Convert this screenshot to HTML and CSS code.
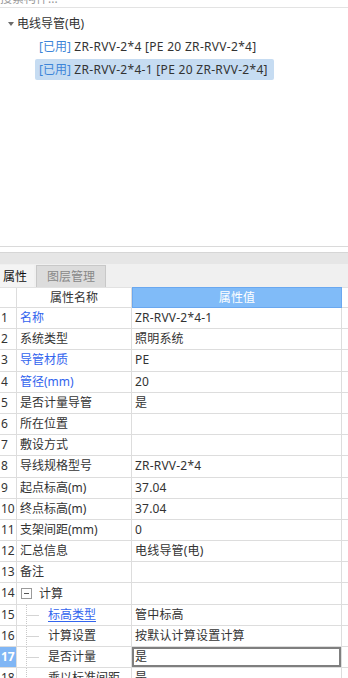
FILE: index.html
```html
<!DOCTYPE html>
<html lang="zh-CN">
<head>
    <meta charset="UTF-8">
    <meta name="viewport" content="width=device-width, initial-scale=1.0">
    <title>构件属性</title>
    <link rel="stylesheet" href="styles.css">
</head>
<body>
    <div id="search">
        <span class="search-text">搜索构件...</span>
    </div>

    <div id="tree">
        <div class="tree-root"><span class="caret"></span>电线导管(电)</div>
        <div class="tree-item"><span class="used">[已用]</span> ZR-RVV-2*4 [PE 20 ZR-RVV-2*4]</div>
        <div class="tree-item selected"><span class="used">[已用]</span> ZR-RVV-2*4-1 [PE 20 ZR-RVV-2*4]</div>
    </div>

    <div id="splitter"></div>

    <div id="tabs">
        <div class="tab active">属性</div>
        <div class="tab">图层管理</div>
    </div>

    <div id="props">
        <div class="row head">
            <div class="num"></div>
            <div class="name">属性名称</div>
            <div class="value">属性值</div>
        </div>
        <div class="row"><div class="num">1</div><div class="name link">名称</div><div class="value">ZR-RVV-2*4-1</div></div>
        <div class="row"><div class="num">2</div><div class="name">系统类型</div><div class="value">照明系统</div></div>
        <div class="row"><div class="num">3</div><div class="name link">导管材质</div><div class="value">PE</div></div>
        <div class="row"><div class="num">4</div><div class="name link">管径(mm)</div><div class="value">20</div></div>
        <div class="row"><div class="num">5</div><div class="name">是否计量导管</div><div class="value">是</div></div>
        <div class="row"><div class="num">6</div><div class="name">所在位置</div><div class="value"></div></div>
        <div class="row"><div class="num">7</div><div class="name">敷设方式</div><div class="value"></div></div>
        <div class="row"><div class="num">8</div><div class="name">导线规格型号</div><div class="value">ZR-RVV-2*4</div></div>
        <div class="row"><div class="num">9</div><div class="name">起点标高(m)</div><div class="value">37.04</div></div>
        <div class="row"><div class="num">10</div><div class="name">终点标高(m)</div><div class="value">37.04</div></div>
        <div class="row"><div class="num">11</div><div class="name">支架间距(mm)</div><div class="value">0</div></div>
        <div class="row"><div class="num">12</div><div class="name">汇总信息</div><div class="value">电线导管(电)</div></div>
        <div class="row"><div class="num">13</div><div class="name">备注</div><div class="value"></div></div>
        <div class="row"><div class="num">14</div><div class="name group"><span class="toggle"></span>计算</div><div class="value"></div></div>
        <div class="row"><div class="num">15</div><div class="name sub link under">标高类型</div><div class="value">管中标高</div></div>
        <div class="row"><div class="num">16</div><div class="name sub">计算设置</div><div class="value">按默认计算设置计算</div></div>
        <div class="row current"><div class="num">17</div><div class="name sub">是否计量</div><div class="value">是</div></div>
        <div class="row"><div class="num">18</div><div class="name sub">乘以标准间距</div><div class="value">是</div></div>
    </div>
</body>
</html>
```

FILE: styles.css
```css
body {
    margin: 0;
    width: 348px;
    height: 678px;
    overflow: hidden;
    background: #fff;
    color: #333;
    font-family: "Noto Sans", "Noto Sans CJK SC", sans-serif;
    font-size: 12px;
}

#search {
    height: 7px;
    overflow: hidden;
    border-bottom: 1px solid #e3e3e3;
}

.search-text {
    display: block;
    margin-top: -8px;
    line-height: 14px;
    color: #9a9a9a;
}

#tree {
    height: 239px;
    padding-top: 5px;
    box-sizing: border-box;
    border-bottom: 1px solid #dadada;
}

.tree-root,
.tree-item {
    height: 21px;
    line-height: 21px;
    white-space: nowrap;
    margin-bottom: 2px;
}

.tree-root {
    display: flex;
    align-items: center;
    padding-left: 8px;
}

.caret {
    width: 0;
    height: 0;
    border-left: 3.5px solid transparent;
    border-right: 3.5px solid transparent;
    border-top: 4px solid #6b6b6b;
    margin-right: 3px;
}

.tree-item {
    margin-left: 35px;
    padding-left: 4px;
    width: 235px;
    border-radius: 2px;
    letter-spacing: 0.3px;
}

.tree-item.selected {
    background: #c6dcf2;
}

.used {
    color: #3d85d8;
    letter-spacing: 0;
}

#splitter {
    height: 12px;
    margin-top: 5px;
    background: #e6e6e6;
    border-top: 1px solid #d6d6d6;
    box-sizing: border-box;
}

#tabs {
    height: 23px;
    background: #f0f0f0;
    display: flex;
    align-items: flex-end;
}

.tab {
    height: 22px;
    line-height: 22px;
    padding: 0 10px;
    box-sizing: border-box;
    background: #dcdcdc;
    border: 1px solid #c8c8c8;
    border-bottom: none;
    color: #888;
    margin-right: 1px;
}

.tab.active {
    background: #f4f4f4;
    border-color: transparent;
    color: #111;
    padding: 0 6px 0 2px;
    margin-right: 2px;
}

#props {
    border-top: 1px solid #e2e2e2;
}

.row {
    display: grid;
    grid-template-columns: 17px 115px 210px;
    height: 21.2px;
    line-height: 20px;
    border-bottom: 1px solid #dddddd;
    box-sizing: border-box;
    white-space: nowrap;
}

.row > div {
    border-right: 1px solid #dddddd;
    overflow: hidden;
    position: relative;
}

.num {
    padding-left: 1px;
}

.name {
    padding-left: 3px;
}

.value {
    padding-left: 3px;
    letter-spacing: 0.2px;
}

.row.head {
    height: 20px;
    line-height: 19px;
}

.row.head .name {
    text-align: center;
    padding-left: 0;
}

.row.head .value {
    background: #80bbf8;
    border: 1px solid #6aa8f0;
    color: #fff;
    text-align: center;
    padding-left: 0;
    margin-top: -1px;
    height: 21px;
    line-height: 19px;
    box-sizing: border-box;
}

.link {
    color: #3264ee;
}

.under {
    text-decoration: underline;
    text-underline-offset: 2px;
}

.group {
    display: flex;
    align-items: center;
}

.toggle {
    width: 11px;
    height: 11px;
    border: 1px solid #9a9a9a;
    box-sizing: border-box;
    margin-right: 7px;
    margin-left: 1px;
    position: relative;
    background: #fff;
}

.toggle::after {
    content: "";
    position: absolute;
    left: 2px;
    right: 2px;
    top: 4px;
    height: 1px;
    background: #555;
}

.name.sub {
    padding-left: 31px;
}

.name.sub::before {
    content: "";
    position: absolute;
    left: 9px;
    top: -1px;
    bottom: -1px;
    border-left: 1px dotted #c8c8c8;
}

.name.sub::after {
    content: "";
    position: absolute;
    left: 10px;
    width: 12px;
    top: 10px;
    border-top: 1px solid #d4d4d4;
}

.row.current .num {
    background: #80b6f5;
    color: #fff;
    font-weight: bold;
}

.row.current .value {
    box-shadow: inset 0 0 0 2px #7f7f7f;
}
```
